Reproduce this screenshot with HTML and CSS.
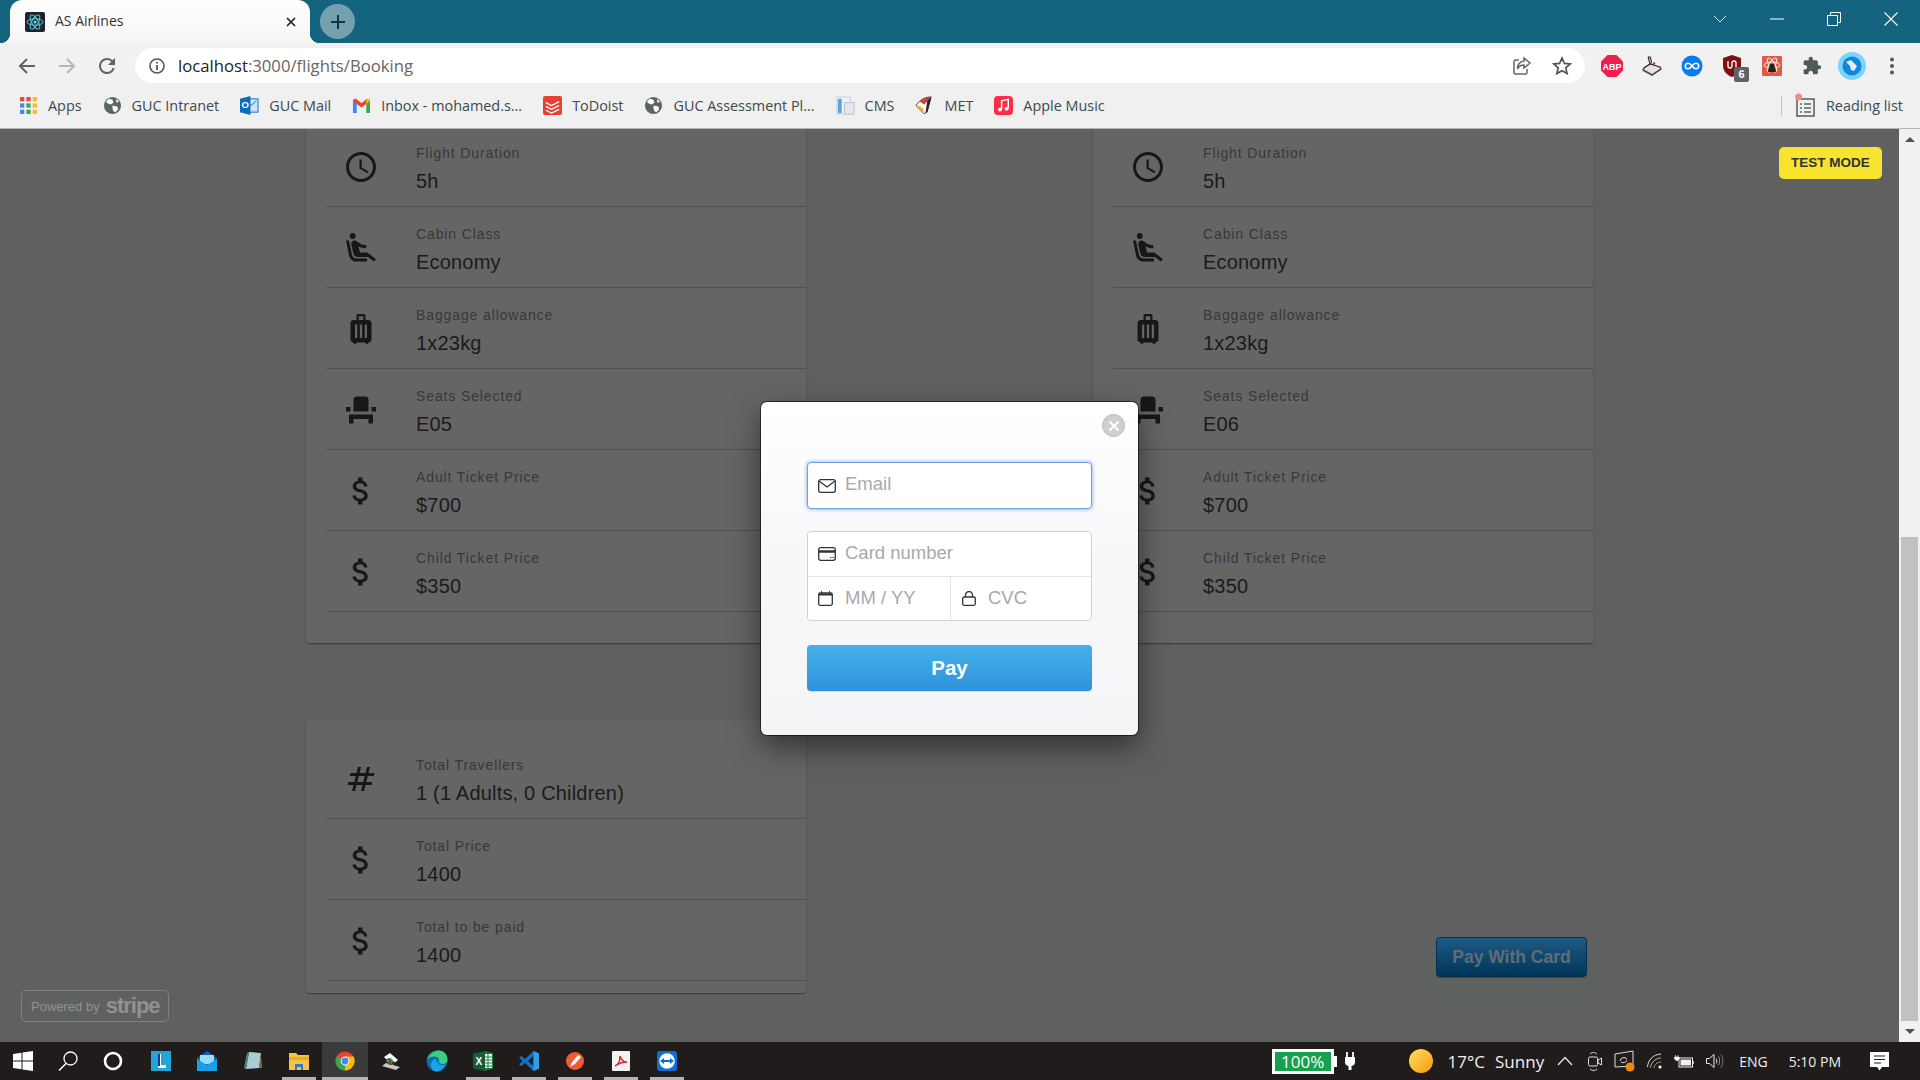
FILE: index.html
```html
<!DOCTYPE html>
<html lang="en">
<head>
    <meta charset="UTF-8">
    <title>AS Airlines</title>
    <link rel="stylesheet" href="styles.css">
</head>
<body>
    <!-- shared icons -->
    <svg class="defs">
        <symbol id="i-clock" viewBox="0 0 24 24"><path d="M11.99 2C6.47 2 2 6.48 2 12s4.47 10 9.99 10C17.52 22 22 17.52 22 12S17.52 2 11.99 2zM12 20c-4.42 0-8-3.58-8-8s3.58-8 8-8 8 3.58 8 8-3.58 8-8 8zm.5-13H11v6l5.25 3.15.75-1.23-4.5-2.67z"/></symbol>
        <symbol id="i-cabin" viewBox="0 0 24 24"><path d="M5.35 5.64c-.9-.64-1.12-1.88-.49-2.79.63-.9 1.88-1.12 2.79-.49.9.64 1.12 1.88.49 2.79-.64.9-1.88 1.12-2.79.49zM16 19H8.93c-1.48 0-2.74-1.08-2.96-2.54L4 7H2l1.99 9.76C4.37 19.2 6.47 21 8.94 21H16v-2zm.23-4h-4.88l-1.03-4.1c1.58.89 3.28 1.54 5.15 1.22V9.99c-1.63.31-3.44-.27-4.69-1.25L9.14 7.47c-.23-.18-.49-.3-.76-.38-.32-.09-.66-.12-.99-.06h-.02c-1.23.22-2.05 1.39-1.84 2.61l1.35 5.92C7.16 16.98 8.39 18 9.83 18h6.85l3.82 3 1.5-1.5-5.77-4.5z"/></symbol>
        <symbol id="i-bag" viewBox="0 0 24 24"><path d="M17 6h-2V3c0-.55-.45-1-1-1h-4c-.55 0-1 .45-1 1v3H7c-1.1 0-2 .9-2 2v11c0 1.1.9 2 2 2 0 .55.45 1 1 1s1-.45 1-1h6c0 .55.45 1 1 1s1-.45 1-1c1.1 0 2-.9 2-2V8c0-1.1-.9-2-2-2zM9.5 18H8V9h1.5v9zm3.25 0h-1.5V9h1.5v9zm.75-12h-3V3.5h3V6zM16 18h-1.5V9H16v9z"/></symbol>
        <symbol id="i-seat" viewBox="0 0 24 24"><path d="M4 18v3h3v-3h10v3h3v-6H4zm15-8h3v3h-3zM2 10h3v3H2zm15 3H7V5c0-1.1.9-2 2-2h6c1.1 0 2 .9 2 2v8z"/></symbol>
        <symbol id="i-money" viewBox="0 0 24 24"><path d="M11.8 10.9c-2.27-.59-3-1.2-3-2.15 0-1.09 1.01-1.85 2.7-1.85 1.78 0 2.44.85 2.5 2.1h2.21c-.07-1.72-1.12-3.3-3.21-3.81V3h-3v2.16c-1.94.42-3.5 1.68-3.5 3.61 0 2.31 1.91 3.46 4.7 4.13 2.5.6 3 1.48 3 2.41 0 .69-.49 1.79-2.7 1.79-2.06 0-2.87-.92-2.98-2.1h-2.2c.12 2.19 1.76 3.42 3.68 3.83V21h3v-2.15c1.95-.37 3.5-1.5 3.5-3.55 0-2.84-2.43-3.81-4.7-4.4z"/></symbol>
        <symbol id="i-tag" viewBox="0 0 24 24"><path d="M20.5 10l.5-2h-4l1-4h-2l-1 4h-4l1-4h-2L9 8H5l-.5 2h4l-1 4h-4L3 16h4l-1 4h2l1-4h4l-1 4h2l1-4h4l.5-2h-4l1-4h4zm-7 4h-4l1-4h4l-1 4z"/></symbol>
        <symbol id="i-globe" viewBox="0 0 20 20"><circle cx="10" cy="10" r="9" fill="#5a6662"/><path d="M6 3l4 1 1 3-3 2-3-1-2-2zM10 10l5 1 1 3-3 3-2-1-1-3zM14 3l3 3-3 1z" fill="#fff"/></symbol>
    </svg>

    <header class="chrome">
        <div class="tabstrip">
            <div class="tab">
                <svg class="favicon" viewBox="0 0 20 20"><rect width="20" height="20" rx="2" fill="#20232a"/><g fill="none" stroke="#61dafb" stroke-width=".9"><ellipse cx="10" cy="10" rx="8" ry="3.2"/><ellipse cx="10" cy="10" rx="8" ry="3.2" transform="rotate(60 10 10)"/><ellipse cx="10" cy="10" rx="8" ry="3.2" transform="rotate(120 10 10)"/></g><circle cx="10" cy="10" r="1.6" fill="#61dafb"/></svg>
                <span class="tab-title">AS Airlines</span>
                <svg class="tab-close" viewBox="0 0 12 12"><path d="M2 2l8 8M10 2l-8 8" stroke="#222" stroke-width="1.7"/></svg>
            </div>
            <div class="new-tab">
                <svg viewBox="0 0 16 16" width="16" height="16"><path d="M8 1v14M1 8h14" stroke="#17323d" stroke-width="2"/></svg>
            </div>
            <div class="win-controls">
                <div class="win-btn"><svg width="14" height="8" viewBox="0 0 14 8"><path d="M1 1l6 6 6-6" fill="none" stroke="#cfe0e6"/></svg></div>
                <div class="win-btn"><svg width="14" height="2" viewBox="0 0 14 2"><path d="M0 1h14" stroke="#fff"/></svg></div>
                <div class="win-btn"><svg width="14" height="14" viewBox="0 0 14 14"><path d="M.5 3.5h10v10H.5zM3.5 3V.5h10v10H11" fill="none" stroke="#fff"/></svg></div>
                <div class="win-btn"><svg width="14" height="14" viewBox="0 0 14 14"><path d="M.5.5l13 13M13.5.5l-13 13" stroke="#fff" stroke-width="1.1"/></svg></div>
            </div>
        </div>

        <div class="toolbar">
            <div class="nav-btn"><svg width="18" height="18" viewBox="0 0 18 18"><path d="M17 9H2M9 2L2 9l7 7" fill="none" stroke="#5a6662" stroke-width="2"/></svg></div>
            <div class="nav-btn"><svg width="18" height="18" viewBox="0 0 18 18"><path d="M1 9h15M9 2l7 7-7 7" fill="none" stroke="#b2b8b6" stroke-width="2"/></svg></div>
            <div class="nav-btn"><svg width="24" height="24" viewBox="0 0 24 24"><path d="M17.65 6.35A7.96 7.96 0 0 0 12 4a8 8 0 1 0 7.73 10h-2.08A6 6 0 1 1 12 6c1.66 0 3.14.69 4.22 1.78L13 11h7V4l-2.35 2.35z" fill="#5a6662"/></svg></div>
            <div class="omnibox">
                <svg width="18" height="18" viewBox="0 0 18 18"><circle cx="9" cy="9" r="7" fill="none" stroke="#555" stroke-width="1.6"/><path d="M9 8v5M9 5v1.6" stroke="#555" stroke-width="1.8"/></svg>
                <span class="url"><span class="url-host">localhost</span>:3000/flights/Booking</span>
                <svg class="omni-share" width="20" height="20" viewBox="0 0 20 20"><path d="M7 4H3.5A1.5 1.5 0 0 0 2 5.5v11A1.5 1.5 0 0 0 3.5 18h10a1.500 1.500 0 0 0 1.500-1.500V13" fill="none" stroke="#666" stroke-width="1.500"/><path d="M12 2l6 5-6 5V9c-3 0-5 1-6.500 4 0-5 2.500-7.500 6.500-8z" fill="none" stroke="#666" stroke-width="1.500"/></svg>
                <svg width="20" height="20" viewBox="0 0 20 20"><path d="M10 2l2.400 5.400 5.800.6-4.400 3.900 1.300 5.700L10 14.700l-5.100 2.900 1.300-5.700L1.800 8l5.800-.6z" fill="none" stroke="#555" stroke-width="1.700"/></svg>
            </div>
            <div class="extensions">
                <div class="ext"><svg width="22" height="22" viewBox="0 0 22 22"><path d="M6.500 0h9L22 6.500v9L15.500 22h-9L0 15.500v-9z" fill="#ee1f4d"/><text x="11" y="14.500" class="abp-text">ABP</text></svg></div>
                <div class="ext"><svg width="20" height="20" viewBox="0 0 20 20"><path d="M6 1h2.500l1 6-1.500 1z" fill="#d9c6a0" stroke="#222"/><circle cx="12" cy="7.500" r="1.300" fill="#c33"/><path d="M8 8l10 3 1 2-9 6-9-5 1-2z" fill="#e4e4e4" stroke="#222" stroke-width="1.200"/><path d="M1 14l9 5 9-6" fill="none" stroke="#555" stroke-width="1.500"/></svg></div>
                <div class="ext"><svg width="22" height="22" viewBox="0 0 22 22"><circle cx="11" cy="11" r="10.500" fill="#0a7cf2"/><path d="M11 11c-1.500-2-2.500-2.700-4-2.700a2.700 2.700 0 0 0 0 5.400c1.500 0 2.500-.7 4-2.700s2.500-2.700 4-2.700a2.700 2.700 0 0 1 0 5.400c-1.500 0-2.500-.7-4-2.700z" fill="none" stroke="#fff" stroke-width="1.600"/></svg></div>
                <div class="ext">
                    <svg width="20" height="22" viewBox="0 0 20 22"><path d="M10 0l9 3v8c0 5-4 9-9 11-5-2-9-6-9-11V3z" fill="#800f14"/><path d="M6 6v5a2 2 0 0 0 4 0V8a2 2 0 0 1 4 0v4" fill="none" stroke="#fff" stroke-width="1.300"/></svg>
                    <span class="ext-badge">6</span>
                </div>
                <div class="ext"><svg width="20" height="20" viewBox="0 0 20 20"><rect width="20" height="20" rx="1" fill="#df5a47"/><g fill="none" stroke="#fff" stroke-width=".8"><ellipse cx="10" cy="9" rx="8" ry="3"/><ellipse cx="10" cy="9" rx="8" ry="3" transform="rotate(60 10 9)"/><ellipse cx="10" cy="9" rx="8" ry="3" transform="rotate(120 10 9)"/></g><path d="M8 8h4l2 8H6z" fill="#222"/></svg></div>
                <div class="ext"><svg width="20" height="20" viewBox="0 0 24 24"><path d="M20.500 11H19V7c0-1.100-.9-2-2-2h-4V3.500a2.500 2.500 0 0 0-5 0V5H4c-1.100 0-2 .9-2 2v3.800h1.500c1.500 0 2.700 1.200 2.700 2.700S5 16.200 3.500 16.200H2V20c0 1.100.9 2 2 2h3.800v-1.500c0-1.500 1.200-2.700 2.700-2.700s2.700 1.200 2.700 2.700V22H17c1.100 0 2-.9 2-2v-4h1.500a2.500 2.500 0 0 0 0-5z" fill="#4d5a56"/></svg></div>
                <div class="ext"><svg width="28" height="28" viewBox="0 0 28 28"><circle cx="14" cy="14" r="14" fill="#7cd4fb"/><circle cx="14" cy="14" r="9.500" fill="#0f86e0"/><path d="M8 10l5-2 6 6-3 5-3-1-1-4z" fill="#e6eef5"/></svg></div>
                <div class="ext"><svg width="6" height="18" viewBox="0 0 6 18"><g fill="#555"><circle cx="3" cy="2.500" r="2"/><circle cx="3" cy="9" r="2"/><circle cx="3" cy="15.500" r="2"/></g></svg></div>
            </div>
        </div>

        <nav class="bookmarks">
            <a class="bookmark"><svg class="bm-icon" viewBox="0 0 18 18"><g><rect x="1" y="1" width="4" height="4" fill="#e8453c"/><rect x="7" y="1" width="4" height="4" fill="#e8453c"/><rect x="13" y="1" width="4" height="4" fill="#f9bb2d"/><rect x="1" y="7" width="4" height="4" fill="#4285f4"/><rect x="7" y="7" width="4" height="4" fill="#34a853"/><rect x="13" y="7" width="4" height="4" fill="#f9bb2d"/><rect x="1" y="13" width="4" height="4" fill="#4285f4"/><rect x="7" y="13" width="4" height="4" fill="#34a853"/><rect x="13" y="13" width="4" height="4" fill="#f9bb2d"/></g></svg>Apps</a>
            <a class="bookmark"><svg class="bm-icon"><use href="#i-globe"/></svg>GUC Intranet</a>
            <a class="bookmark"><svg class="bm-icon" viewBox="0 0 20 20"><rect x="7" y="3" width="12" height="14" fill="#cfe3f5" stroke="#0f6cbd"/><path d="M9 7l3 3 5-5" fill="none" stroke="#0f6cbd"/><path d="M0 3l11-3v20L0 17z" fill="#0f6cbd"/><text x="5.500" y="13" class="outlook-text">O</text></svg>GUC Mail</a>
            <a class="bookmark"><svg class="bm-icon" viewBox="0 0 20 16"><path d="M1 16V3l4 3v10z" fill="#4285f4"/><path d="M15 16V6l4-3v13z" fill="#34a853"/><path d="M1 3.500c0-2.500 2.500-3.500 4-2l5 4 5-4c1.500-1.500 4-.5 4 2L15 6.500 10 10 5 6.500z" fill="#ea4335"/><path d="M15 1.500c1.500-1.500 4-.5 4 2L15 6.500z" fill="#fbbc04"/></svg>Inbox - mohamed.s...</a>
            <a class="bookmark"><svg class="bm-icon" viewBox="0 0 20 20"><rect width="20" height="20" rx="2" fill="#e44232"/><path d="M3 7l6 3 8-4M3 11l6 3 8-4M3 15l6 3 8-4" fill="none" stroke="#fff" stroke-width="1.400"/></svg>ToDoist</a>
            <a class="bookmark"><svg class="bm-icon"><use href="#i-globe"/></svg>GUC Assessment Pl...</a>
            <a class="bookmark"><svg class="bm-icon" viewBox="0 0 20 20"><rect x="1" y="1" width="14" height="18" fill="#eef1f5" stroke="#c8d0d8"/><rect x="2" y="3" width="4" height="15" fill="#5aa5dc"/><rect x="9" y="7" width="10" height="12" fill="#e3e8ee" stroke="#b9c3cd"/></svg>CMS</a>
            <a class="bookmark"><svg class="bm-icon" viewBox="0 0 20 20"><path d="M17 1C11 1 5 4 1 10l8 8c2 1 3 0 4-2l4-15z" fill="#fff" stroke="#333"/><path d="M1 10c3 0 6 1 8 4v4z" fill="#efb81a"/><path d="M17 1c-5 0-9 2-12 5l5 3z" fill="#c9433a"/><path d="M13 5l-2 13 2-1 4-16z" fill="#222"/></svg>MET</a>
            <a class="bookmark"><svg class="bm-icon" viewBox="0 0 20 20"><rect width="20" height="20" rx="4" fill="#fb2d49"/><path d="M8 14V5l7-1.500V13" fill="none" stroke="#fff" stroke-width="1.500"/><circle cx="6.300" cy="14.300" r="2" fill="#fff"/><circle cx="13.300" cy="13.300" r="2" fill="#fff"/></svg>Apple Music</a>
            <div class="reading-list">
                <svg width="20" height="26" viewBox="0 0 20 26"><rect x="2" y="6" width="17" height="17" fill="none" stroke="#5a6662" stroke-width="1.600"/><path d="M5 11h2M9 11h7M5 15h2M9 15h7M5 19h2M9 19h7" stroke="#5a6662" stroke-width="1.600"/><circle cx="3.500" cy="4" r="3.500" fill="#f28b82"/></svg>
                <span>Reading list</span>
            </div>
        </nav>
    </header>

    <div class="viewport">
        <main class="page">
            <section class="trip-cards">
                <div class="card card-trip">
                    <div class="row"><svg class="row-icon"><use href="#i-clock"/></svg><div class="row-text"><div class="row-label">Flight Duration</div><div class="row-value">5h</div></div></div>
                    <div class="row"><svg class="row-icon"><use href="#i-cabin"/></svg><div class="row-text"><div class="row-label">Cabin Class</div><div class="row-value">Economy</div></div></div>
                    <div class="row"><svg class="row-icon"><use href="#i-bag"/></svg><div class="row-text"><div class="row-label">Baggage allowance</div><div class="row-value">1x23kg</div></div></div>
                    <div class="row"><svg class="row-icon"><use href="#i-seat"/></svg><div class="row-text"><div class="row-label">Seats Selected</div><div class="row-value">E05</div></div></div>
                    <div class="row"><svg class="row-icon"><use href="#i-money"/></svg><div class="row-text"><div class="row-label">Adult Ticket Price</div><div class="row-value">$700</div></div></div>
                    <div class="row"><svg class="row-icon"><use href="#i-money"/></svg><div class="row-text"><div class="row-label">Child Ticket Price</div><div class="row-value">$350</div></div></div>
                </div>
                <div class="card card-trip">
                    <div class="row"><svg class="row-icon"><use href="#i-clock"/></svg><div class="row-text"><div class="row-label">Flight Duration</div><div class="row-value">5h</div></div></div>
                    <div class="row"><svg class="row-icon"><use href="#i-cabin"/></svg><div class="row-text"><div class="row-label">Cabin Class</div><div class="row-value">Economy</div></div></div>
                    <div class="row"><svg class="row-icon"><use href="#i-bag"/></svg><div class="row-text"><div class="row-label">Baggage allowance</div><div class="row-value">1x23kg</div></div></div>
                    <div class="row"><svg class="row-icon"><use href="#i-seat"/></svg><div class="row-text"><div class="row-label">Seats Selected</div><div class="row-value">E06</div></div></div>
                    <div class="row"><svg class="row-icon"><use href="#i-money"/></svg><div class="row-text"><div class="row-label">Adult Ticket Price</div><div class="row-value">$700</div></div></div>
                    <div class="row"><svg class="row-icon"><use href="#i-money"/></svg><div class="row-text"><div class="row-label">Child Ticket Price</div><div class="row-value">$350</div></div></div>
                </div>
            </section>

            <section class="totals">
                <div class="card card-totals">
                    <div class="row"><svg class="row-icon"><use href="#i-tag"/></svg><div class="row-text"><div class="row-label">Total Travellers</div><div class="row-value">1 (1 Adults, 0 Children)</div></div></div>
                    <div class="row"><svg class="row-icon"><use href="#i-money"/></svg><div class="row-text"><div class="row-label">Total Price</div><div class="row-value">1400</div></div></div>
                    <div class="row"><svg class="row-icon"><use href="#i-money"/></svg><div class="row-text"><div class="row-label">Total to be paid</div><div class="row-value">1400</div></div></div>
                </div>
                <button class="pay-card-btn">Pay With Card</button>
            </section>

            <div class="test-mode">TEST MODE</div>
            <div class="stripe-badge"><span class="powered">Powered by</span><span class="stripe-word">stripe</span></div>

            <!-- checkout modal -->
            <div class="modal-wrap">
                <div class="modal">
                    <div class="modal-close"><svg width="12" height="12" viewBox="0 0 12 12"><path d="M1.500 1.500l9 9M10.500 1.500l-9 9" stroke="#fff" stroke-width="2.200"/></svg></div>
                    <div class="field field-focus">
                        <svg class="field-icon" width="18" height="14" viewBox="0 0 18 14"><rect x=".7" y=".7" width="16.600" height="12.600" rx="2" fill="none" stroke="#333" stroke-width="1.300"/><path d="M1 2l8 6 8-6" fill="none" stroke="#333" stroke-width="1.300"/></svg>
                        <span class="placeholder">Email</span>
                    </div>
                    <div class="card-fields">
                        <div class="field field-number">
                            <svg class="field-icon" width="18" height="14" viewBox="0 0 18 14"><rect x=".7" y=".7" width="16.600" height="12.600" rx="2" fill="none" stroke="#333" stroke-width="1.300"/><path d="M1 4.500h16" stroke="#333" stroke-width="2.400"/><path d="M12 10.500h1.500M14.500 10.500H16" stroke="#333"/></svg>
                            <span class="placeholder">Card number</span>
                        </div>
                        <div class="field-split">
                            <div class="field field-expiry">
                                <svg class="field-icon" width="15" height="15" viewBox="0 0 15 15"><rect x=".7" y="2" width="13.600" height="12.300" rx="1.500" fill="none" stroke="#333" stroke-width="1.300"/><path d="M1 3.500h13" stroke="#333" stroke-width="2"/><path d="M3.500 0v2M11.500 0v2" stroke="#333"/></svg>
                                <span class="placeholder">MM / YY</span>
                            </div>
                            <div class="field field-cvc">
                                <svg class="field-icon" width="14" height="15" viewBox="0 0 14 15"><rect x=".7" y="6" width="12.600" height="8.300" rx="1.500" fill="none" stroke="#333" stroke-width="1.300"/><path d="M3.500 6V4a3.500 3.500 0 0 1 7 0v2" fill="none" stroke="#333" stroke-width="1.300"/></svg>
                                <span class="placeholder">CVC</span>
                            </div>
                        </div>
                    </div>
                    <button class="pay-btn">Pay</button>
                </div>
            </div>
        </main>

        <aside class="scrollbar">
            <div class="scroll-arrow"><span class="tri-up"></span></div>
            <div class="scroll-track"><div class="scroll-thumb"></div></div>
            <div class="scroll-arrow"><span class="tri-down"></span></div>
        </aside>
    </div>

    <footer class="taskbar">
        <div class="task-item task-sys"><svg width="20" height="20" viewBox="0 0 20 20"><path d="M0 3l8.500-1.200v7.700H0zM9.500 1.600L20 0v9.500H9.500zM0 10.500h8.500v7.700L0 17zM9.500 10.500H20V20L9.500 18.400z" fill="#fff"/></svg></div>
        <div class="task-item task-sys"><svg width="20" height="20" viewBox="0 0 20 20"><circle cx="12.500" cy="7.500" r="6.500" fill="none" stroke="#fff" stroke-width="1.300"/><path d="M8 12.500L1 19.500" stroke="#fff" stroke-width="1.500"/></svg></div>
        <div class="task-item task-sys"><svg width="20" height="20" viewBox="0 0 20 20"><circle cx="10" cy="10" r="8" fill="none" stroke="#fff" stroke-width="2.600"/></svg></div>
        <div class="task-item task-first"><svg width="20" height="20" viewBox="0 0 20 20"><rect width="20" height="20" fill="#22a6d8"/><path d="M7 3h3v11h5v3H7z" fill="#fff"/><path d="M7 3h2v12H7z" fill="#133c8b"/></svg></div>
        <div class="task-item"><svg width="20" height="20" viewBox="0 0 20 20"><path d="M0 7l10-7 10 7v13H0z" fill="#0a62b8"/><path d="M3 4h14v9H3z" fill="#9ddcf7"/><path d="M0 8l10 6 10-6v12H0z" fill="#1a9ee6"/></svg></div>
        <div class="task-item"><svg width="18" height="20" viewBox="0 0 18 20"><path d="M5 1l12 1-2 15-13 1z" fill="#a7ced4"/><path d="M5 1L2 18l-2-1 3-15z" fill="#5c7f88"/><path d="M15 17l2-15 1 15z" fill="#8a6f4d"/></svg></div>
        <div class="task-item running"><svg width="20" height="19" viewBox="0 0 20 19"><path d="M0 1h7l2 2h11v15H0z" fill="#f6c444"/><path d="M0 5h20v3H0z" fill="#e8a92a"/><path d="M6 12h8v6h-2v-3H8v3H6z" fill="#2a7ec9"/></svg></div>
        <div class="task-item running active"><svg width="20" height="20" viewBox="0 0 20 20"><circle cx="10" cy="10" r="9.500" fill="#ea4335"/><path d="M10 10L1.800 14.700A9.500 9.500 0 0 0 10 19.500z" fill="#34a853"/><path d="M10 10l8.200 4.700A9.500 9.500 0 0 1 10 19.500z" fill="#fbbc04"/><path d="M10 5.500h8.600a9.500 9.500 0 0 1-.4 9.200L10 10z" fill="#fbbc04"/><path d="M10 10L1.800 14.700A9.500 9.500 0 0 1 1.800 5.300z" fill="#34a853"/><circle cx="10" cy="10" r="4.400" fill="#fff"/><circle cx="10" cy="10" r="3.400" fill="#4285f4"/></svg></div>
        <div class="task-item"><svg width="20" height="20" viewBox="0 0 20 20"><path d="M1 15l4-3 14 4-4 3z" fill="#c9c9c9"/><path d="M3 6l6-4 8 7-6 5z" fill="#fff"/><path d="M4 9l6 5 5-2-7-5z" fill="#333"/><path d="M5 10l2-2 2 2-2 2zM8 8l2-1 2 2-2 1zM9 11l2-1 1 1-2 2z" fill="#3ba55d"/><path d="M6 12l3-1 1 2-2 1z" fill="#c22"/></svg></div>
        <div class="task-item"><svg width="22" height="22" viewBox="0 0 22 22"><circle cx="11" cy="11" r="10.500" fill="#0d6bb8"/><path d="M1 10C3 3 9 .5 13 .5c5 0 8.500 4 8.500 9 0 3-2.500 4.500-5 4.500-2 0-4-1-3.500-2.500.8-2-1-5-4.500-5C5 6.500 2 8 1 10z" fill="#3bd07f"/><path d="M5 15c0-3 2-6 5-6 .5 3 3 7 9 6-2 4-5 6.500-8.500 6.500C7 21.500 5 18 5 15z" fill="#1aa3e8"/></svg></div>
        <div class="task-item running"><svg width="20" height="20" viewBox="0 0 20 20"><path d="M11 0l9 2v16l-9 2z" fill="#107c41"/><rect x="11" y="3" width="8" height="14" fill="#fff"/><path d="M11 6h8M11 9h8M11 12h8M11 15h8M15 3v14" stroke="#107c41"/><path d="M0 2.500L12 0v20L0 17.500z" fill="#185c37"/><text x="5.800" y="13.500" class="excel-text">X</text></svg></div>
        <div class="task-item running"><svg width="20" height="20" viewBox="0 0 20 20"><path d="M14.500 0L20 2.500v15L14.500 20 6 12l-3.500 3L0 13.500 3.500 10 0 6.500 2.500 5 6 8z" fill="#0f72c4"/><path d="M14.500 5L9 10l5.500 5z" fill="#1f1c1c"/><path d="M14.500 0L20 2.500v15L14.500 20z" fill="#2f9de8"/></svg></div>
        <div class="task-item running"><svg width="18" height="18" viewBox="0 0 18 18"><circle cx="9" cy="9" r="9" fill="#ef5b31"/><path d="M4 15l2-5 6-7 3 2-6 7z" fill="#fff"/></svg></div>
        <div class="task-item running"><svg width="18" height="20" viewBox="0 0 18 20"><rect width="18" height="20" rx="1" fill="#f2f2f2"/><path d="M3 15c3-1 5-5 5-10 1 4 3 6 7 6-4 0-8 1-12 4z" fill="none" stroke="#d8262c" stroke-width="1.400"/></svg></div>
        <div class="task-item running"><svg width="20" height="20" viewBox="0 0 20 20"><rect width="20" height="20" rx="3" fill="#0e6fd0"/><circle cx="10" cy="10" r="7.800" fill="#fff"/><path d="M3 10l4-3v2h6V7l4 3-4 3v-2H7v2z" fill="#0e6fd0"/></svg></div>

        <div class="tray">
            <div class="tray-power">
                <div class="battery-meter"><span class="battery-level">100%</span></div>
                <svg width="10" height="18" viewBox="0 0 10 18"><path d="M2 0v5M8 0v5" stroke="#fff" stroke-width="1.800"/><path d="M0 5h10v5a4 4 0 0 1-3.500 4v4h-3v-4A4 4 0 0 1 0 10z" fill="#fff"/></svg>
            </div>
            <div class="tray-weather">
                <span class="sun"></span>
                <span class="temp">17°C</span>
                <span class="sky">Sunny</span>
            </div>
            <div class="tray-icons">
                <svg class="tray-chevron" width="16" height="10" viewBox="0 0 16 10"><path d="M1 9l7-7.500L15 9" fill="none" stroke="#e8e8e8" stroke-width="1.300"/></svg>
                <svg width="14" height="21" viewBox="0 0 14 21"><rect x=".5" y="6" width="9" height="9" rx="1.500" fill="none" stroke="#ddd"/><path d="M10 9l3.500-2v7L10 12z" fill="none" stroke="#ddd"/><path d="M2 3c2-2 5-2 7 0M2 18c2 2 5 2 7 0" fill="none" stroke="#ddd"/></svg>
                <svg width="21" height="23" viewBox="0 0 21 23"><path d="M1 4l18-3v15l-18 1z" fill="none" stroke="#ddd"/><path d="M6 11a4 4 0 0 1 7-2M13 10a4 4 0 0 1-6 2" fill="none" stroke="#ddd"/><circle cx="16" cy="17" r="4.500" fill="#f2890f"/></svg>
                <svg width="15" height="16" viewBox="0 0 15 16"><g fill="none" stroke="#ddd"><path d="M.5 14C1 7 6 1.500 14 1"/><path d="M3.500 14.500C4 10 8 5 14 5" stroke="#bbb"/><path d="M7 15c0-3 3-6 7-6" stroke="#999"/></g><circle cx="13" cy="14" r="1.500" fill="#fff"/></svg>
                <svg width="20" height="13" viewBox="0 0 20 13"><rect x="5" y="3" width="13.500" height="9" fill="none" stroke="#eee"/><rect x="6.500" y="4.500" width="10.500" height="6" fill="#eee"/><path d="M19 6v3" stroke="#eee" stroke-width="1.400"/><path d="M1.500 0v2M4 0v2M.5 2h4.500v2l-2 2-2.500-2z" fill="#fff" stroke="#fff" stroke-width=".6"/></svg>
                <svg width="18" height="16" viewBox="0 0 18 16"><path d="M.5 5.500h3L8 1.500v13l-4.500-4h-3z" fill="none" stroke="#e8e8e8"/><path d="M10 5.500c1 1.500 1 3.500 0 5" fill="none" stroke="#ddd"/><path d="M12.500 3.500c1.500 2.500 1.500 6 0 8.500" fill="none" stroke="#999"/><path d="M15 1.500c2.500 4 2.500 9 0 13" fill="none" stroke="#777"/></svg>
            </div>
            <span class="tray-lang">ENG</span>
            <span class="tray-time">5:10 PM</span>
            <svg class="tray-notify" width="19" height="19" viewBox="0 0 19 19"><path d="M0 0h19v15h-7l-2.500 3.500L7 15H0z" fill="#fff"/><path d="M4 4h11M4 7.500h11M4 11h7" stroke="#201c1c" stroke-width="1.200"/></svg>
        </div>
    </footer>
</body>
</html>
```

FILE: styles.css
```css
* {
    margin: 0;
    padding: 0;
    box-sizing: border-box;
}

body {
    width: 1920px;
    height: 1080px;
    overflow: hidden;
    display: flex;
    flex-direction: column;
    font-family: "Liberation Sans", Arial, sans-serif;
    background: #5f6160;
}

.defs {
    display: none;
}

/* browser chrome */
.chrome {
    font-family: "Open Sans", "Noto Sans", sans-serif;
    color: #333;
}

.tabstrip {
    height: 43px;
    background: #14637f;
    display: flex;
    align-items: center;
}

.tab {
    position: relative;
    width: 300px;
    height: 43px;
    margin-left: 10px;
    padding: 0 13px 0 15px;
    display: flex;
    align-items: center;
    background: linear-gradient(#ffffff, #f5f5f5);
    border-radius: 12px 12px 0 0;
}

.tab::before,
.tab::after {
    content: "";
    position: absolute;
    bottom: 0;
    width: 10px;
    height: 10px;
}

.tab::before {
    left: -10px;
    background: radial-gradient(circle at 0 0, transparent 10px, #f5f5f5 10.5px);
}

.tab::after {
    right: -10px;
    background: radial-gradient(circle at 100% 0, transparent 10px, #f5f5f5 10.5px);
}

.favicon {
    width: 20px;
    height: 20px;
    margin-right: 10px;
}

.tab-title {
    font-size: 14px;
    color: #333;
    margin-bottom: 2px;
}

.tab-close {
    width: 12px;
    height: 12px;
    margin-left: auto;
}

.new-tab {
    width: 35px;
    height: 35px;
    margin-left: 10px;
    border-radius: 50%;
    background: #74a0b0;
    display: flex;
    align-items: center;
    justify-content: center;
}

.win-controls {
    margin-left: auto;
    padding-right: 1px;
    display: flex;
    align-items: center;
    height: 37px;
    align-self: flex-start;
}

.win-btn {
    width: 57px;
    height: 37px;
    display: flex;
    align-items: center;
    justify-content: center;
}

.toolbar {
    height: 40px;
    padding: 5px 8px 0 7px;
    background: #f1f1f1;
    display: flex;
    align-items: center;
}

.nav-btn {
    width: 40px;
    display: flex;
    justify-content: center;
}

.omnibox {
    flex: 1;
    height: 35px;
    margin-left: 8px;
    padding: 0 13px;
    background: #fff;
    border-radius: 18px;
    display: flex;
    align-items: center;
    gap: 20px;
}

.omnibox > svg:first-child {
    margin-right: -8px;
}

.url {
    font-size: 16.700px;
    color: #666;
    margin-right: auto;
}

.url-host {
    color: #222;
}

.extensions {
    margin-left: 7px;
    display: flex;
}

.ext {
    position: relative;
    width: 40px;
    height: 28px;
    display: flex;
    align-items: center;
    justify-content: center;
}

.ext-badge {
    position: absolute;
    left: 22px;
    top: 15px;
    width: 15px;
    height: 15px;
    border-radius: 2px;
    background: #5f6368;
    color: #fff;
    font: bold 11px/15px "Liberation Sans", sans-serif;
    text-align: center;
}

.abp-text {
    font: bold 9px "Liberation Sans", sans-serif;
    fill: #fff;
    text-anchor: middle;
}

.outlook-text {
    font: bold 10px "Liberation Sans", sans-serif;
    fill: #fff;
    text-anchor: middle;
}

.excel-text {
    font: bold 10px "Liberation Sans", sans-serif;
    fill: #fff;
    text-anchor: middle;
}

.bookmarks {
    height: 46px;
    padding-left: 19px;
    background: #f0f0f0;
    border-bottom: 1px solid #b4b4b4;
    display: flex;
    align-items: center;
    gap: 21px;
    font-size: 14.400px;
    color: #3c4a4a;
}

.bookmark {
    display: flex;
    align-items: center;
    gap: 10px;
}

.bm-icon {
    width: 19px;
    height: 19px;
}

.reading-list {
    margin-left: auto;
    height: 20px;
    padding: 0 17px 0 13px;
    border-left: 1px solid #c4c4c4;
    display: flex;
    align-items: center;
    gap: 11px;
}

/* page, dimmed behind the checkout */
.viewport {
    flex: 1;
    min-height: 0;
    display: flex;
}

.page {
    position: relative;
    flex: 1;
    overflow: hidden;
    background: #5f6160;
    padding-left: 306px;
}

.trip-cards {
    margin-top: -21px;
    display: flex;
    gap: 287px;
}

.card {
    width: 500px;
    padding-left: 20px;
    background: #656565;
    border-radius: 4px;
    box-shadow: 0 2px 1px -1px rgba(0,0,0,.2), 0 1px 1px 0 rgba(0,0,0,.14), 0 1px 3px 0 rgba(0,0,0,.12);
}

.card-trip {
    padding-top: 18px;
    padding-bottom: 31px;
}

.card-totals {
    padding-top: 19px;
    padding-bottom: 12px;
}

.totals {
    margin-top: 76px;
    display: flex;
    align-items: flex-end;
}

.row {
    height: 81px;
    padding: 1px 0 0 17px;
    border-bottom: 1px solid #515151;
    display: flex;
    align-items: center;
    gap: 37px;
}

.row-icon {
    width: 36px;
    height: 36px;
    fill: #171717;
    flex: none;
}

.row-text {
    padding-top: 4px;
}

.row-label {
    font-size: 14px;
    line-height: 20px;
    letter-spacing: 0.88px;
    color: #383838;
}

.row-value {
    margin-top: 4px;
    font-size: 20px;
    line-height: 28px;
    letter-spacing: 0.19px;
    color: #1b1b1b;
}

.pay-card-btn {
    width: 151px;
    height: 40px;
    margin: 0 0 16px 630px;
    border: 1px solid #02304f;
    border-radius: 4px;
    background: linear-gradient(#1e5b85, #003558);
    box-shadow: 0 1px 1px rgba(0,0,0,.3);
    color: #626c74;
    font: bold 17.500px "Liberation Sans", sans-serif;
}

.test-mode {
    position: absolute;
    top: 18px;
    right: 17px;
    width: 103px;
    height: 32px;
    border-radius: 5px;
    background: #f7e431;
    color: #333;
    font-size: 13.500px;
    font-weight: bold;
    line-height: 32px;
    text-align: center;
}

.stripe-badge {
    position: absolute;
    left: 21px;
    top: 861px;
    width: 148px;
    height: 32px;
    border: 1px solid #7f8281;
    border-radius: 5px;
    padding-left: 9px;
    display: flex;
    align-items: center;
    gap: 6px;
    color: #8f9291;
}

.powered {
    font-size: 13px;
}

.stripe-word {
    font-size: 22px;
    font-weight: bold;
    letter-spacing: -1px;
}

/* checkout */
.modal-wrap {
    position: absolute;
    inset: 0;
    padding-top: 273px;
    display: flex;
    justify-content: center;
    align-items: flex-start;
}

.modal {
    position: relative;
    width: 377px;
    height: 333px;
    padding: 60px 46px 0;
    border-radius: 6px;
    background: linear-gradient(#ffffff, #f8f8fa 45%, #f5f5f7);
    box-shadow: 0 0 0 1px rgba(0,0,0,.55), 0 12px 30px rgba(0,0,0,.5);
    display: flex;
    flex-direction: column;
}

.modal-close {
    position: absolute;
    top: 12px;
    right: 13px;
    width: 23px;
    height: 23px;
    border-radius: 50%;
    background: #cfcfcf;
    border: 1px solid #bdbdbd;
    display: flex;
    align-items: center;
    justify-content: center;
}

.field {
    display: flex;
    align-items: center;
    background: #fff;
}

.field-focus {
    height: 47px;
    padding-left: 10px;
    gap: 9px;
    border: 1px solid #6a9fe0;
    border-radius: 4px;
    box-shadow: 0 0 4px rgba(70,130,220,.7);
}

.card-fields {
    height: 90px;
    margin-top: 22px;
    border: 1px solid #d0d0d4;
    border-radius: 4px;
    display: flex;
    flex-direction: column;
    overflow: hidden;
}

.field-number {
    height: 45px;
    padding-left: 10px;
    gap: 9px;
    border-bottom: 1px solid #e4e4e8;
}

.field-split {
    flex: 1;
    display: flex;
}

.field-expiry {
    width: 143px;
    padding-left: 10px;
    gap: 12px;
    border-right: 1px solid #e4e4e8;
}

.field-cvc {
    flex: 1;
    padding-left: 11px;
    gap: 12px;
}

.field-icon {
    flex: none;
}

.placeholder {
    font-size: 18.500px;
    color: #a8a8ad;
    margin-bottom: 3px;
}

.field-split .placeholder {
    margin-bottom: 1px;
}

.pay-btn {
    height: 46px;
    margin-top: 24px;
    border: none;
    border-radius: 4px;
    background: linear-gradient(#45b1e8, #2f92db);
    box-shadow: 0 1px 1px rgba(0,0,0,.1);
    color: #fff;
    font: bold 20.500px "Liberation Sans", sans-serif;
}

/* scrollbar */
.scrollbar {
    width: 21px;
    background: #f1f1f1;
    display: flex;
    flex-direction: column;
}

.scroll-arrow {
    height: 21px;
    display: flex;
    align-items: center;
    justify-content: center;
}

.tri-up {
    border: 5px solid transparent;
    border-top: 0;
    border-bottom: 5px solid #505050;
}

.tri-down {
    border: 5px solid transparent;
    border-bottom: 0;
    border-top: 5px solid #505050;
}

.scroll-track {
    flex: 1;
    padding: 387px 2px 0 2px;
    display: flex;
}

.scroll-thumb {
    flex: 1;
    background: #c1c1c1;
}

/* windows taskbar */
.taskbar {
    height: 38px;
    background: #201c1c;
    display: flex;
    font-family: "Open Sans", "Noto Sans", sans-serif;
    color: #eee;
}

.task-item {
    position: relative;
    width: 46px;
    height: 38px;
    display: flex;
    align-items: center;
    justify-content: center;
}

.task-sys {
    width: 45px;
}

.task-first {
    margin-left: 3px;
}

.running::after {
    content: "";
    position: absolute;
    left: 6px;
    right: 6px;
    bottom: 0;
    height: 3px;
    background: #b4b4b4;
}

.active {
    background: #3a3a38;
}

.active::after {
    left: 0;
    right: 0;
}

.tray {
    margin-left: auto;
    padding-right: 31px;
    display: flex;
    align-items: center;
}

.tray-power {
    display: flex;
    align-items: center;
    gap: 11px;
}

.battery-meter {
    position: relative;
    width: 62px;
    height: 25px;
    padding: 3px;
    background: #fff;
}

.battery-meter::after {
    content: "";
    position: absolute;
    right: -3px;
    top: 7px;
    width: 3px;
    height: 11px;
    background: #fff;
}

.battery-level {
    display: block;
    height: 19px;
    background: #16a050;
    color: #fff;
    font-size: 17px;
    line-height: 19px;
    text-align: center;
}

.tray-weather {
    margin-left: 54px;
    display: flex;
    align-items: center;
    font-size: 17px;
}

.sun {
    width: 24px;
    height: 24px;
    border-radius: 50%;
    background: linear-gradient(135deg, #fce25a, #f79a12);
}

.temp {
    margin-left: 15px;
}

.sky {
    margin-left: 10px;
}

.tray-icons {
    margin-left: 13px;
    display: flex;
    align-items: center;
    gap: 12px;
}

.tray-chevron {
    margin-right: 3px;
}

.tray-lang {
    margin-left: 15px;
    font-size: 14px;
}

.tray-time {
    margin-left: 21px;
    font-size: 14px;
}

.tray-notify {
    margin-left: 29px;
}
```
